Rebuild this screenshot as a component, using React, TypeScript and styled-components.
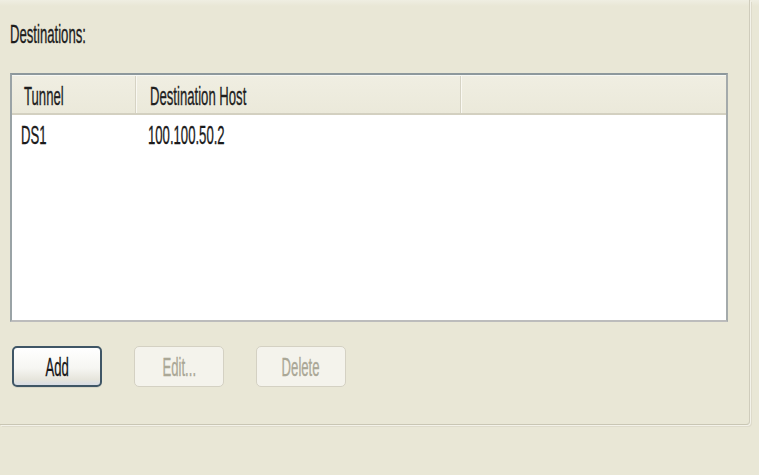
import React from "react";
import styled, { createGlobalStyle } from "styled-components";

const Global = createGlobalStyle`
  html, body {
    margin: 0;
    padding: 0;
    background: #e9e7d6;
    overflow: hidden;
  }
  body {
    width: 759px;
    height: 475px;
    font-family: "Liberation Sans", Arial, sans-serif;
  }
`;

const Page = styled.div`
  width: 759px;
  height: 475px;
  display: flex;
  flex-direction: column;
  background: linear-gradient(#efeee2 0px, #e9e7d6 6px);
`;

const TabPage = styled.div`
  width: 750px;
  height: 425px;
  box-sizing: border-box;
  padding-left: 10px;
  padding-top: 21px;
  border-right: 1px solid #cfccbc;
  border-bottom: 1px solid #c9c6b4;
  border-bottom-right-radius: 4px;
  box-shadow: 1px 1px 0 #f4f3ea, 2px 2px 0 #dedbcb;
  display: flex;
  flex-direction: column;
`;

const Narrow = styled.span<{ $center?: boolean }>`
  display: inline-block;
  font-size: 26px;
  line-height: 26px;
  white-space: nowrap;
  -webkit-text-stroke: 0.35px currentColor;
  transform: scaleX(0.505);
  transform-origin: ${(p) => (p.$center ? "center" : "left")} center;
`;

const Title = styled.div`
  height: 26px;
  color: #1c1c1c;
  margin-bottom: 26px;
`;

const ListBox = styled.div`
  width: 718px;
  height: 249px;
  box-sizing: border-box;
  background: #ffffff;
  border-top: 2px solid #8d989c;
  border-left: 2px solid #9aa3a6;
  border-right: 2px solid #a4aaab;
  border-bottom: 2px solid #bcbcbc;
  display: flex;
  flex-direction: column;
`;

const Header = styled.div`
  height: 40px;
  box-sizing: border-box;
  display: flex;
  background: linear-gradient(#f0eee2, #ebe9da);
  border-top: 1px solid #f7f8f4;
  border-bottom: 2px solid #d3d0c0;
`;

const HeaderCell = styled.div<{ $w?: number; $pad: number; $last?: boolean }>`
  ${(p) => (p.$w ? `width: ${p.$w}px;` : "flex: 1;")}
  flex-shrink: 0;
  box-sizing: border-box;
  padding-left: ${(p) => p.$pad}px;
  padding-top: 3px;
  display: flex;
  align-items: center;
  color: #1e1e1e;
  border-right: ${(p) => (p.$last ? "none" : "1px solid #d6d3c4")};
  box-shadow: ${(p) => (p.$last ? "none" : "1px 0 0 #f9f8f2")};
`;

const Row = styled.div`
  display: flex;
  height: 38px;
  padding-top: 7px;
  box-sizing: border-box;
  color: #1a1a1a;
`;

const Cell = styled.div<{ $w?: number; $pad: number }>`
  ${(p) => (p.$w ? `width: ${p.$w}px;` : "flex: 1;")}
  flex-shrink: 0;
  box-sizing: border-box;
  padding-left: ${(p) => p.$pad}px;
`;

const Buttons = styled.div`
  display: flex;
  gap: 32px;
  margin-top: 24px;
  padding-left: 2px;
`;

const Button = styled.button<{ $enabled?: boolean }>`
  width: 90px;
  height: 41px;
  box-sizing: border-box;
  padding: 0;
  margin: 0;
  font-family: "Liberation Sans", Arial, sans-serif;
  display: flex;
  align-items: center;
  justify-content: center;
  border-radius: 5px;
  border: ${(p) => (p.$enabled ? "2px solid #3f5666" : "1px solid #d4d1c3")};
  background: ${(p) =>
    p.$enabled
      ? "linear-gradient(#ffffff 0%, #f6f6f2 55%, #e6e5dc 85%, #d8dde6 100%)"
      : "#f4f3ec"};
  color: ${(p) => (p.$enabled ? "#161616" : "#aaa796")};
  box-shadow: ${(p) => (p.$enabled ? "0 1px 0 #d8d6c8" : "none")};
`;

export default function App() {
  return (
    <>
      <Global />
      <Page>
        <TabPage>
          <Title>
            <Narrow>Destinations:</Narrow>
          </Title>
          <ListBox>
            <Header>
              <HeaderCell $w={124} $pad={12}>
                <Narrow>Tunnel</Narrow>
              </HeaderCell>
              <HeaderCell $w={325} $pad={14}>
                <Narrow>Destination Host</Narrow>
              </HeaderCell>
              <HeaderCell $pad={0} $last />
            </Header>
            <Row>
              <Cell $w={125} $pad={9}>
                <Narrow>DS1</Narrow>
              </Cell>
              <Cell $w={325} $pad={11}>
                <Narrow>100.100.50.2</Narrow>
              </Cell>
              <Cell $pad={0} />
            </Row>
          </ListBox>
          <Buttons>
            <Button $enabled>
              <Narrow $center>Add</Narrow>
            </Button>
            <Button disabled>
              <Narrow $center>Edit...</Narrow>
            </Button>
            <Button disabled>
              <Narrow $center>Delete</Narrow>
            </Button>
          </Buttons>
        </TabPage>
      </Page>
    </>
  );
}
